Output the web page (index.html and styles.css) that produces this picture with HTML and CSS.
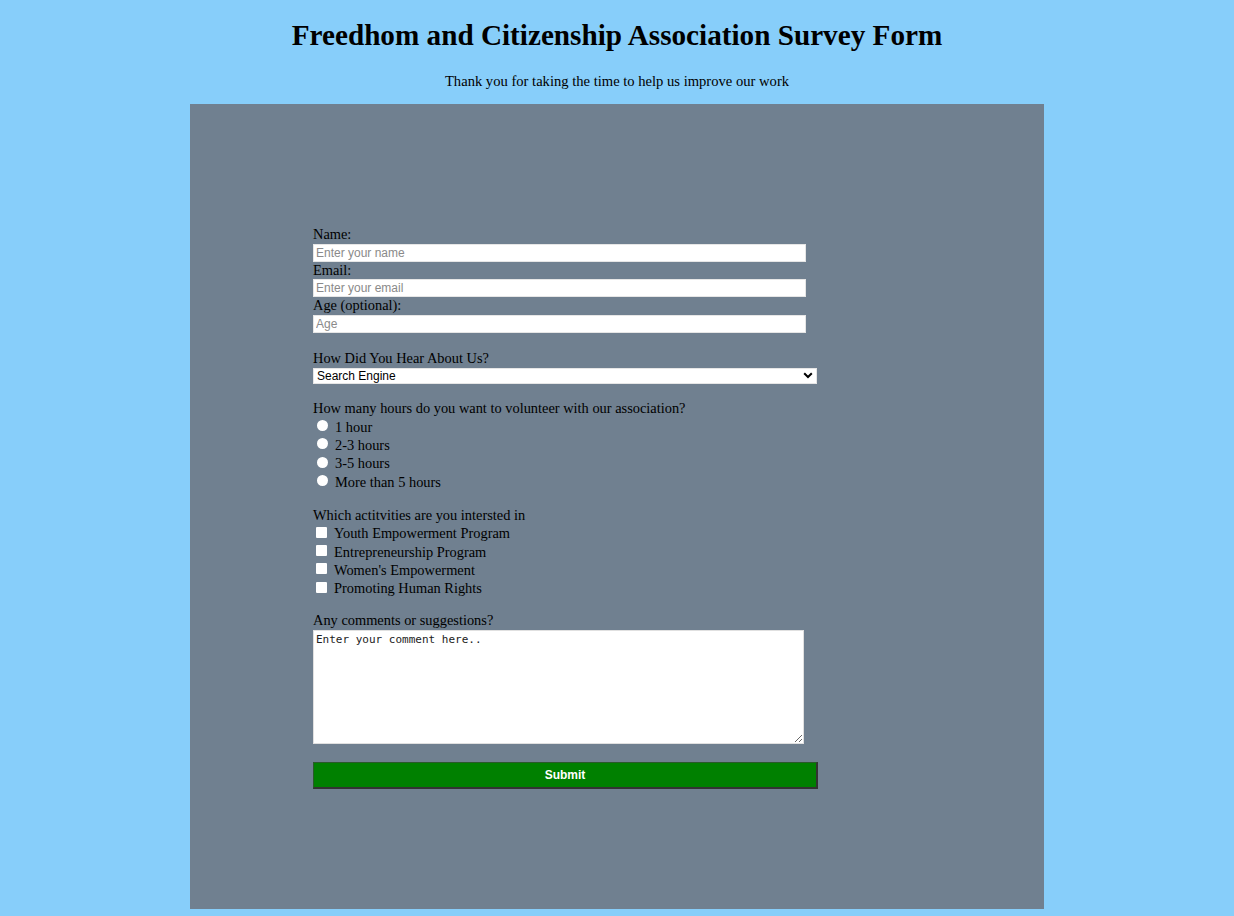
FILE: index.html
```html
<!DOCTYPE html>
<html lang="en">
<head>
<meta charset="utf-8">
<title>Survey Form</title>
<link rel="stylesheet" href="styles.css">
</head>
<body>
<header class="header">
  <h1 class="title">Freedhom and Citizenship Association Survey Form</h1>
  <p class="subtitle">Thank you for taking the time to help us improve our work</p>
</header>
<main class="panel">
  <form class="form">
    <label class="label" for="name">Name:</label>
    <input class="text-input" id="name" type="text" placeholder="Enter your name">
    <label class="label" for="email">Email:</label>
    <input class="text-input" id="email" type="email" placeholder="Enter your email">
    <label class="label" for="age">Age (optional):</label>
    <input class="text-input" id="age" type="number" placeholder="Age">

    <div class="group group-select">
      <label class="label" for="hear">How Did You Hear About Us?</label>
      <div class="select-wrap">
        <select class="select" id="hear">
          <option>Search Engine</option>
          <option>Social Media</option>
          <option>Friend</option>
        </select>
        <svg class="chevron" width="10" height="7" viewBox="0 0 10 7"><path d="M1.2 1.2 L5 5 L8.8 1.2" fill="none" stroke="#000" stroke-width="2"/></svg>
      </div>
    </div>

    <div class="group group-radio">
      <p class="label">How many hours do you want to volunteer with our association?</p>
      <label class="option"><input class="radio" type="radio" name="hours"><span>1 hour</span></label>
      <label class="option"><input class="radio" type="radio" name="hours"><span>2-3 hours</span></label>
      <label class="option"><input class="radio" type="radio" name="hours"><span>3-5 hours</span></label>
      <label class="option"><input class="radio" type="radio" name="hours"><span>More than 5 hours</span></label>
    </div>

    <div class="group group-check">
      <p class="label">Which actitvities are you intersted in</p>
      <label class="option"><input class="check" type="checkbox"><span>Youth Empowerment Program</span></label>
      <label class="option"><input class="check" type="checkbox"><span>Entrepreneurship Program</span></label>
      <label class="option"><input class="check" type="checkbox"><span>Women's Empowerment</span></label>
      <label class="option"><input class="check" type="checkbox"><span>Promoting Human Rights</span></label>
    </div>

    <div class="group group-comment">
      <label class="label" for="comment">Any comments or suggestions?</label>
      <textarea class="textarea" id="comment" placeholder="Enter your comment here.."></textarea>
    </div>

    <button class="submit" type="submit">Submit</button>
  </form>
</main>
</body>
</html>
```

FILE: styles.css
```css
html, body {
  margin: 0;
  padding: 0;
}
body {
  background: #87cefa;
  font-family: "Liberation Serif", "Times New Roman", serif;
  font-size: 14.4px;
  color: #000;
  height: 916px;
  overflow: hidden;
}
.header {
  text-align: center;
  padding-top: 19px;
}
.title {
  margin: 0;
  font-size: 29.2px;
  line-height: 33px;
  font-weight: bold;
}
.subtitle {
  margin: 0;
  padding-top: 21px;
  padding-bottom: 3px;
  line-height: 17px;
  font-size: 14.6px;
}
.panel {
  width: 854px;
  height: 805px;
  margin: 11px auto 0;
  background: #708090;
  box-sizing: border-box;
  padding: 122px 0 0 123px;
}
.form {
  display: flex;
  flex-direction: column;
  align-items: flex-start;
}
.label {
  display: block;
  margin: 0;
  line-height: 17.5px;
  height: 17.5px;
}
.text-input {
  width: 493px;
  height: 18px;
  box-sizing: border-box;
  border: 1px solid #e6e6e6;
  background: #fff;
  padding: 0 2px;
  margin: 0;
  font-family: "Liberation Sans", Arial, sans-serif;
  font-size: 12px;
  outline: none;
}
.text-input::placeholder {
  color: #8a8a8a;
}
.group {
  display: flex;
  flex-direction: column;
  align-items: flex-start;
}
.group-select {
  margin-top: 17px;
}
.select-wrap {
  position: relative;
  width: 504px;
  height: 16px;
}
.select {
  appearance: none;
  -webkit-appearance: none;
  width: 504px;
  height: 16px;
  box-sizing: border-box;
  border: 1px solid #e6e6e6;
  background: #fff;
  padding: 0 3px;
  margin: 0;
  font-family: "Liberation Sans", Arial, sans-serif;
  font-size: 12px;
  line-height: 14px;
  color: #000;
  outline: none;
}
.chevron {
  position: absolute;
  right: 4px;
  top: 5px;
  pointer-events: none;
}
.group-radio {
  margin-top: 17px;
}
.option {
  display: flex;
  align-items: center;
  height: 18.3px;
  line-height: 18px;
}
.radio {
  appearance: none;
  -webkit-appearance: none;
  width: 11px;
  height: 11px;
  border-radius: 50%;
  background: #fff;
  border: 0;
  margin: -2px 7px 0 4px;
}
.group-check {
  margin-top: 16px;
}
.check {
  appearance: none;
  -webkit-appearance: none;
  width: 11px;
  height: 11px;
  background: #fff;
  border: 0;
  border-radius: 1px;
  margin: -2px 7px 0 3px;
}
.group-comment {
  margin-top: 15px;
}
.textarea {
  width: 491px;
  height: 114px;
  box-sizing: border-box;
  border: 1px solid #e0e0e0;
  background: #fff;
  padding: 2px 2px;
  margin: 0;
  font-family: "DejaVu Sans Mono", "Liberation Mono", monospace;
  font-size: 11px;
  resize: vertical;
  outline: none;
}
.textarea::placeholder {
  color: #222;
}
.submit {
  margin-top: 18px;
  width: 505px;
  height: 27px;
  box-sizing: border-box;
  background: #008000;
  color: #fff;
  font-family: "Liberation Sans", Arial, sans-serif;
  font-weight: bold;
  font-size: 12px;
  border-style: solid;
  border-width: 1px 2px 2px 1px;
  border-color: #2a5a2a #333 #333 #2a5a2a;
  padding: 0;
  cursor: pointer;
}
```
